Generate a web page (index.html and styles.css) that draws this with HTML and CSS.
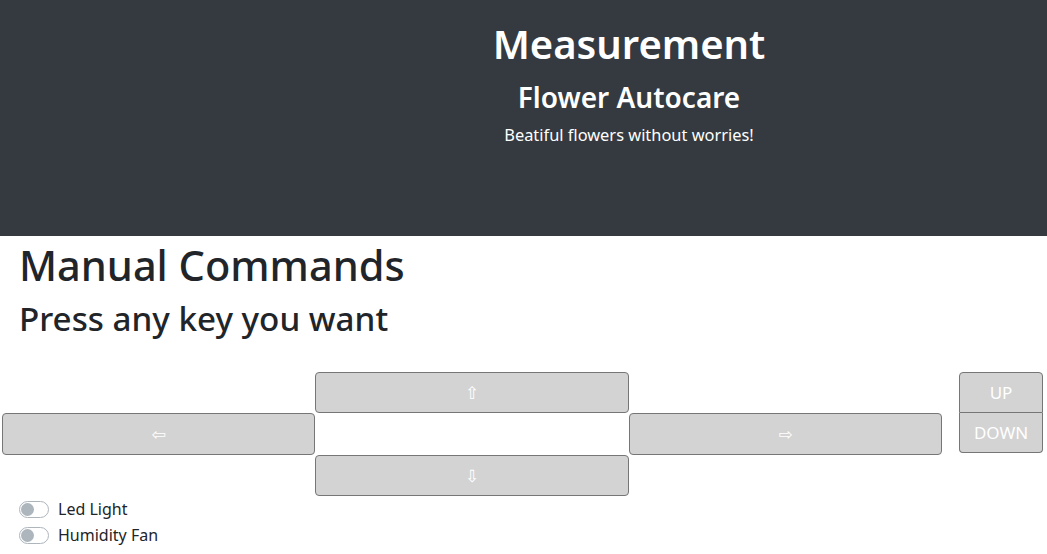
FILE: index.html
```html
<!DOCTYPE html>
<html lang="en">
<head>
<meta charset="utf-8">
<title>Flower Autocare</title>
<link rel="stylesheet" href="styles.css">
</head>
<body>
<header class="hero">
  <div class="hero-inner">
    <h1 class="hero-title">Measurement</h1>
    <h2 class="hero-sub">Flower Autocare</h2>
    <p class="hero-lead">Beatiful flowers without worries!</p>
  </div>
</header>
<main class="main">
  <h1 class="title">Manual Commands</h1>
  <h2 class="subtitle">Press any key you want</h2>
  <div class="controls">
    <div class="pad">
      <button class="key key-up">&#8679;</button>
      <button class="key key-left">&#8678;</button>
      <button class="key key-right">&#8680;</button>
      <button class="key key-down">&#8681;</button>
    </div>
    <div class="vgroup">
      <button class="vbtn vbtn-top">UP</button>
      <button class="vbtn vbtn-bottom">DOWN</button>
    </div>
  </div>
  <div class="switches">
    <label class="switch"><span class="track"><span class="knob"></span></span><span class="switch-label">Led Light</span></label>
    <label class="switch"><span class="track"><span class="knob"></span></span><span class="switch-label">Humidity Fan</span></label>
  </div>
</main>
</body>
</html>
```
FILE: styles.css
```css
* { box-sizing: border-box; }
html, body { margin: 0; padding: 0; }
body {
  font-family: "Noto Sans", "Open Sans", sans-serif;
  color: #212529;
  background: #fff;
  font-size: 16px;
}
.hero {
  background: #343a40;
  height: 236px;
  color: #fff;
  padding-left: 211px;
  padding-top: 16px;
}
.hero-inner { text-align: center; }
.hero-title {
  margin: 0;
  font-size: 40px;
  font-weight: 600;
  line-height: 56px;
}
.hero-sub {
  margin: 6px 0 0;
  font-size: 28px;
  font-weight: 600;
  line-height: 38px;
}
.hero-lead {
  margin: 7px 0 0;
  font-size: 16.4px;
  line-height: 24px;
}
.main { padding-top: 2px; }
.title {
  margin: 0 0 0 19px;
  font-size: 41.5px;
  font-weight: 500;
  line-height: 54px;
}
.subtitle {
  margin: 4px 0 0 19px;
  font-size: 33.2px;
  font-weight: 500;
  line-height: 46px;
}
.controls {
  display: flex;
  align-items: flex-start;
  margin-top: 30px;
  margin-left: 2px;
}
.pad {
  display: grid;
  grid-template-columns: 313px 314px 313px;
  grid-template-rows: 41px 42px 41px;
}
.key {
  background: #d3d3d3;
  border: 1px solid #767676;
  border-radius: 4px;
  color: #fff;
  font-family: "DejaVu Sans", sans-serif;
  font-size: 17px;
  padding: 0;
  margin: 0;
}
.key-up { grid-column: 2; grid-row: 1; }
.key-left { grid-column: 1; grid-row: 2; }
.key-right { grid-column: 3; grid-row: 2; }
.key-down { grid-column: 2; grid-row: 3; }
.vgroup {
  display: flex;
  flex-direction: column;
  margin-left: 17px;
  width: 84px;
}
.vbtn {
  background: #d3d3d3;
  border: 1px solid #767676;
  color: #fff;
  font-family: "Noto Sans", sans-serif;
  font-size: 17px;
  height: 41px;
  padding: 0;
  margin: 0;
}
.vbtn-top { border-radius: 4px 4px 0 0; }
.vbtn-bottom { border-radius: 0 0 4px 4px; border-top: none; height: 40px; }
.switches {
  margin-top: 0;
  padding-left: 19px;
}
.switch {
  display: flex;
  align-items: center;
  height: 26px;
}
.track {
  width: 30px;
  height: 17px;
  border: 1px solid #adb5bd;
  border-radius: 9px;
  background: #fff;
  position: relative;
  margin-right: 9px;
}
.knob {
  position: absolute;
  left: 1px;
  top: 1px;
  width: 13px;
  height: 13px;
  border-radius: 50%;
  background: #adb5bd;
}
.switch-label {
  font-size: 16px;
  line-height: 26px;
}
```
